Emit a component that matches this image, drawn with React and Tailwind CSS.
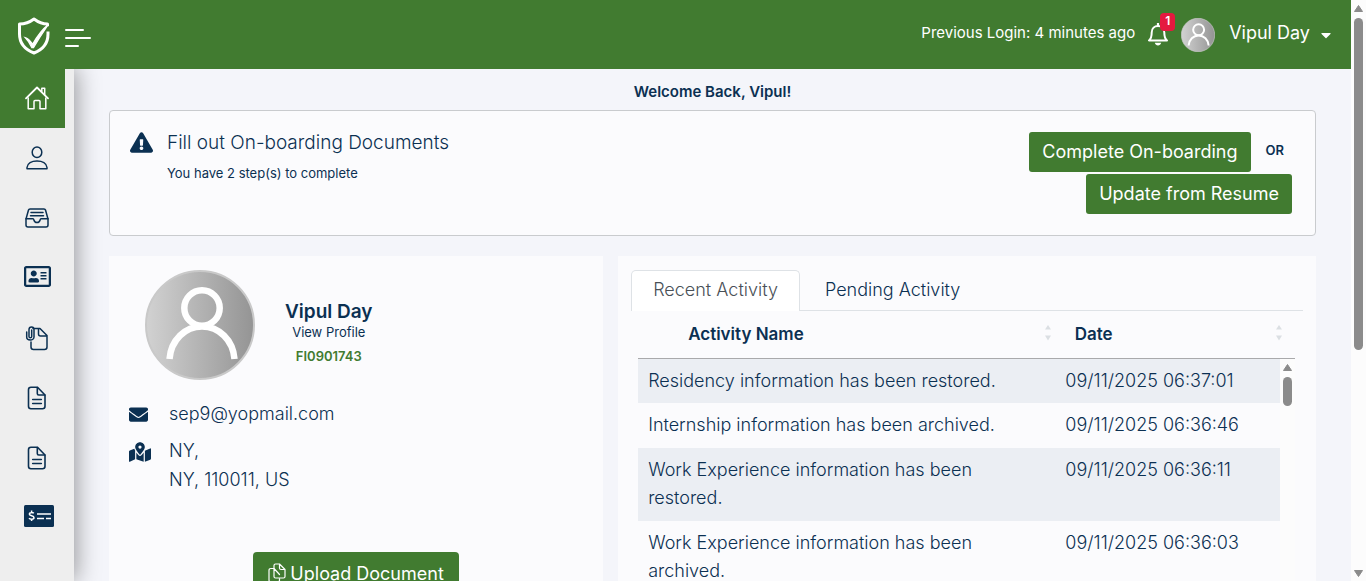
import React from "react";
import { FaExclamationTriangle, FaEnvelope, FaMapMarkedAlt, FaRegAddressCard, FaCaretDown } from "react-icons/fa";

function ShieldLogo() {
  return (
    <svg width="34" height="40" viewBox="0 0 34 40" fill="none" stroke="#fff" strokeWidth="3">
      <path d="M30.5 10.2V8C25 8 21 6 17 3C13 6 9 8 2.5 8V18C2.5 28 8 33.500 17 37C26 33.500 31 28 31 18V15.500" strokeLinejoin="round" />
      <path d="M8.200 21.600C10.500 22 13 24.500 15.600 28.200C20 20.500 25 13.500 31.300 8.500C25.500 17 21 24 16.600 31.500L14.800 31.500C13 27.500 11 24.500 8.200 21.600Z" fill="#fff" strokeWidth="1.300" />
    </svg>
  );
}

function MenuIcon() {
  return (
    <svg width="26" height="20" viewBox="0 0 26 20" fill="#fff">
      <rect x="0" y="1" width="19" height="2" rx="1" />
      <rect x="0" y="9" width="26" height="2" rx="1" />
      <rect x="0" y="17" width="14" height="2" rx="1" />
    </svg>
  );
}

function BellIcon() {
  return (
    <svg width="20" height="23" viewBox="0 0 20 23" fill="none">
      <path d="M1 17.500H19C16.500 15.500 16.300 13 16.300 9.500C16.300 5.500 13.500 3 10 3C6.500 3 3.700 5.500 3.700 9.500C3.700 13 3.500 15.500 1 17.500Z" stroke="#fff" strokeWidth="2" strokeLinejoin="round" />
      <path d="M10 0.500V3" stroke="#fff" strokeWidth="2.200" strokeLinecap="round" />
      <path d="M6.800 19.700H13.200C12.700 21.500 11.500 22.400 10 22.400C8.500 22.400 7.300 21.500 6.800 19.700Z" fill="#fff" />
    </svg>
  );
}

function Avatar({ id, className }) {
  return (
    <svg viewBox="0 0 110 110" className={className} role="img" aria-label="Vipul Day">
      <defs>
        <linearGradient id={id} x1="0" x2="1" y1="0" y2="0">
          <stop offset="0" stopColor="#d2d2d2" />
          <stop offset="1" stopColor="#949494" />
        </linearGradient>
      </defs>
      <circle cx="55" cy="55" r="54" fill={`url(#${id})`} stroke="#c9c9c9" strokeWidth="2" />
      <circle cx="57" cy="38" r="17.700" fill="none" stroke="#fff" strokeWidth="6.500" />
      <path d="M24.500 89C26 70 40 56.500 57 56.500C74 56.500 88 70 89.500 89" fill="none" stroke="#fff" strokeWidth="6.500" />
    </svg>
  );
}

const line = { fill: "none", stroke: "currentColor", strokeWidth: 1.5, strokeLinejoin: "round", strokeLinecap: "round" };

function HomeIcon() {
  return (
    <svg width="24" height="24" viewBox="0 0 24 24" {...line}>
      <path d="M1 12.300L12 1.500L23 12.300" strokeWidth="1.800" />
      <path d="M3.200 12V22.800H9V15.500C9 14.800 9.500 14.500 10 14.500H14C14.500 14.500 15 14.800 15 15.500V22.800H20.800V12M16.800 5.300V2.300H19.700V8.500" />
    </svg>
  );
}

function PersonIcon() {
  return (
    <svg width="24" height="24" viewBox="0 0 24 24" {...line}>
      <ellipse cx="12" cy="6.300" rx="4.800" ry="5.300" />
      <path d="M2 22.700V21.500C2.500 17.500 6.500 15 12 15C17.500 15 21.500 17.500 22 21.500V22.700Z" />
    </svg>
  );
}

function InboxIcon() {
  return (
    <svg width="24" height="20" viewBox="0 0 24 20" {...line}>
      <path d="M1 11L3.500 2C3.700 1.300 4.200 1 5 1H19C19.800 1 20.300 1.300 20.500 2L23 11V17C23 18.300 22.300 19 21 19H3C1.700 19 1 18.300 1 17Z" />
      <path d="M1 10.800H8C8.500 10.800 8.700 11.200 8.900 12C9.300 13.600 10.400 14.500 12 14.500C13.600 14.500 14.700 13.600 15.100 12C15.300 11.200 15.500 10.800 16 10.800H23M6 4.500H18M5.500 7.700H18.500" />
    </svg>
  );
}

function ClipDocIcon() {
  return (
    <svg width="24" height="26" viewBox="0 0 24 26" {...line}>
      <path d="M8 3.500H15L22 10.500V22C22 23.500 21 24.500 19.500 24.500H8.500C7 24.500 6 23.500 6 22V17M13.500 3.500V9C13.500 10.500 14 11 15.500 11H22" />
      <path d="M1.700 7V12C1.700 16 9 16 9 12V4.500C9 1 4 1 4 4.500V11.500C4 13.300 6.700 13.300 6.700 11.500V5" />
    </svg>
  );
}

function DocIcon() {
  return (
    <svg width="20" height="24" viewBox="0 0 20 24" {...line} strokeWidth="1.600">
      <path d="M10.500 1.200H4C2.300 1.200 1.500 2 1.500 3.700V20.300C1.500 22 2.300 22.800 4 22.800H15.500C17.200 22.800 18 22 18 20.300V9Z" />
      <path d="M10.300 1.500V7.500C10.300 8.600 10.800 9 11.800 9H17.800M5.700 13.500H14.300M5.700 17.500H14.300" />
    </svg>
  );
}

function CheckIcon() {
  return (
    <svg width="30" height="22" viewBox="0 0 30 22">
      <rect width="30" height="22" rx="1.500" fill="currentColor" />
      <g stroke="#fff" fill="none" strokeWidth="1.500">
        <path d="M9.800 8.300C9 7.400 5.300 7.200 5.300 9C5.300 11.200 10 10.300 10 12.700C10 14.600 6 14.500 5 13.300M7.600 5.500V7.500M7.600 14V16" />
        <path d="M13 9H27M13 13.500H20M22 13.500H27" />
      </g>
    </svg>
  );
}

function CopyDocIcon() {
  return (
    <svg width="18" height="20" viewBox="0 0 18 20" {...line} strokeWidth="1.200">
      <path d="M6 5.500H3C1.500 5.500 1 6 1 7.500V17C1 18.500 1.500 19 3 19H9.500C11 19 11.500 18.500 11.500 17V15.500" />
      <path d="M11.500 1H7.500C6.500 1 6 1.500 6 2.500V13.500C6 14.500 6.500 15 7.500 15H15.500C16.500 15 17 14.500 17 13.500V6.500ZM11.500 1V5C11.500 6 12 6.500 13 6.500H17M6 5.500L11.500 11.500" />
    </svg>
  );
}

function ScrollArrow({ down }) {
  return (
    <svg width="9" height="7" viewBox="0 0 9 7" fill="#8b8b8b" stroke="#8b8b8b" strokeLinejoin="round">
      <path d={down ? "M0.500 0.500H8.500L4.500 6.500Z" : "M0.500 6.500H8.500L4.500 0.500Z"} />
    </svg>
  );
}

function SortIcon() {
  return (
    <svg width="6" height="16" viewBox="0 0 6 16" fill="#dbdfe3" className="-translate-y-0.5">
      <path d="M0 4.500L3 0L6 4.500ZM0 10.500L3 15.500L6 10.500Z" />
    </svg>
  );
}

const NAV = [
  { label: "Home", icon: <HomeIcon />, active: true },
  { label: "Profile", icon: <PersonIcon /> },
  { label: "Inbox", icon: <InboxIcon /> },
  { label: "Credentials", icon: <FaRegAddressCard size={27} />, pad: "pb-1 pl-[9px]" },
  { label: "Attachments", icon: <ClipDocIcon /> },
  { label: "Documents", icon: <DocIcon /> },
  { label: "Reports", icon: <DocIcon /> },
  { label: "Payments", icon: <CheckIcon />, pad: "pb-1 pl-3" },
];

const ACTIVITY = [
  ["Residency information has been restored.", "09/11/2025 06:37:01"],
  ["Internship information has been archived.", "09/11/2025 06:36:46"],
  ["Work Experience information has been restored.", "09/11/2025 06:36:11"],
  ["Work Experience information has been archived.", "09/11/2025 06:36:03"],
];

function Header() {
  return (
    <header className="relative z-20 flex h-[69px] shrink-0 items-center justify-between bg-[#417b30] pr-[17px] pl-[17px] text-white">
      <div className="flex items-center gap-[14px] pt-[2px]">
        <a href="#home" aria-label="Home"><ShieldLogo /></a>
        <button type="button" aria-label="Toggle menu" className="pt-1"><MenuIcon /></button>
      </div>
      <div className="flex items-center">
        <span className="mr-[13px] pb-[2px] text-[15px]">Previous Login: 4 minutes ago</span>
        <button type="button" aria-label="Notifications" className="relative mr-[13px]">
          <BellIcon />
          <span className="absolute -top-[10px] left-3 flex h-[18px] w-[15px] items-center justify-center rounded-[4px] bg-[#e5193f] pb-[2px] text-[12px] font-semibold">1</span>
        </button>
        <Avatar id="avatar-small" className="mr-[14px] size-[34px]" />
        <button type="button" className="flex items-center gap-2 text-[18px]">
          <span className="pb-[5px]">Vipul Day</span>
          <FaCaretDown size={16} />
        </button>
      </div>
    </header>
  );
}

function Sidebar() {
  return (
    <nav className="relative z-10 -mt-px w-[74px] shrink-0 bg-[#eee] shadow-[2px_0_24px_rgba(0,0,0,0.4)]">
      {NAV.map((item) => (
        <a
          key={item.label}
          href={`#${item.label.toLowerCase()}`}
          aria-label={item.label}
          className={`flex h-[60px] w-[65px] items-center justify-center ${item.pad || "pl-[9px]"} ${item.active ? "bg-[#417b30] text-white" : "text-[#0b3052]"}`}
        >
          {item.icon}
        </a>
      ))}
    </nav>
  );
}

function Onboarding() {
  return (
    <section className="flex h-[126px] justify-between rounded-[4px] border border-[#c9cbce] bg-[#fbfbfd] pt-[21px] pr-[23px] pl-5">
      <div className="flex gap-[14px]">
        <FaExclamationTriangle size={23} className="-mt-px" />
        <div>
          <h2 className="text-[19px] leading-[22px] font-light">Fill out On-boarding Documents</h2>
          <p className="mt-[9px] text-[13px] leading-5">You have 2 step(s) to complete</p>
        </div>
      </div>
      <div className="flex flex-col items-end gap-[2px]">
        <div className="flex items-center gap-[15px] pr-2">
          <button type="button" className="h-10 rounded-[3px] bg-[#417b30] px-[13px] pb-[2px] text-[18px] text-white">Complete On-boarding</button>
          <span className="pb-[2px] text-[13px] font-semibold">OR</span>
        </div>
        <button type="button" className="h-10 rounded-[3px] bg-[#417b30] px-[13px] pb-[2px] text-[18px] text-white">Update from Resume</button>
      </div>
    </section>
  );
}

function ProfileCard() {
  return (
    <section className="col-span-5 flex flex-col bg-[#fbfbfd] pt-[14px] pb-10">
      <div className="flex items-center gap-[30px] pl-9">
        <Avatar id="avatar-large" className="size-[110px]" />
        <div className="flex flex-col items-center pt-[14px]">
          <h2 className="text-[19px] leading-6 font-semibold">Vipul Day</h2>
          <a href="#profile" className="text-[13px] leading-4">View Profile</a>
          <p className="mt-2 text-[13px] leading-4 font-semibold text-[#417b30]">FI0901743</p>
        </div>
      </div>
      <div className="mt-[19px] grid grid-cols-[22px_1fr] gap-x-[18px] gap-y-2 pl-5 text-[18px] leading-[29px] font-light">
        <FaEnvelope size={19} className="mt-[6px]" />
        <p>sep9@yopmail.com</p>
        <FaMapMarkedAlt size={22} className="mt-[5px]" />
        <p>NY,<br />NY, 110011, US</p>
      </div>
      <div className="mt-[58px] flex justify-center">
        <button type="button" className="flex h-[42px] items-center gap-1 rounded-[4px] bg-[#417b30] px-[15px] text-[18px] text-white">
          <CopyDocIcon />
          Upload Document
        </button>
      </div>
    </section>
  );
}

function ActivityCard() {
  return (
    <section className="col-span-7 bg-[#fbfbfd] px-[13px] pt-[14px]">
      <div role="tablist" className="flex border-b border-[#dee2e6] text-[18px] leading-[26px] font-light">
        <button type="button" role="tab" aria-selected="true" className="-mb-px rounded-t-[5px] border border-b-0 border-[#dee2e6] bg-white px-[21px] pt-[6px] pb-2 text-[#495057]">Recent Activity</button>
        <button type="button" role="tab" aria-selected="false" className="px-[25px] pt-[7px] pb-[7px]">Pending Activity</button>
      </div>
      <div className="pr-2 pl-[7px]">
        <div className="border-b border-[#a9a9ab] pr-[13px]">
          <table className="w-full table-fixed text-left text-[17px]">
            <thead>
              <tr className="h-[47px]">
                <th className="w-[65%] pr-[6px] pl-[50px] font-semibold">
                  <div className="flex items-center justify-between">Activity Name<SortIcon /></div>
                </th>
                <th className="pl-[18px] font-semibold">
                  <div className="flex items-center justify-between">Date<SortIcon /></div>
                </th>
              </tr>
            </thead>
          </table>
        </div>
        <div className="flex">
          <table className="flex-1 table-fixed text-[18px] leading-7 font-light">
            <tbody>
              {ACTIVITY.map(([name, date], i) => (
                <tr key={date} className={`align-top ${i % 2 ? "" : "bg-[#ebeef3]"} ${i > 1 ? "border-t border-transparent" : ""}`}>
                  <td className="w-[65%] py-2 pr-9 pl-[10px]">{name}</td>
                  <td className="py-2 pl-[10px] whitespace-nowrap">{date}</td>
                </tr>
              ))}
            </tbody>
          </table>
          <div className="flex w-[15px] shrink-0 flex-col items-center gap-[6px] bg-[#fcfcfc] pt-[5px]">
            <ScrollArrow />
            <div className="h-[29px] w-[9px] rounded-full bg-[#8b8b8b]" />
          </div>
        </div>
      </div>
    </section>
  );
}

export default function App() {
  return (
    <div className="flex h-screen overflow-hidden bg-[#f4f5fa] font-['Inter',sans-serif] text-[#0b3052]">
      <div className="flex min-w-0 flex-1 flex-col">
        <Header />
        <div className="flex min-h-0 flex-1">
          <Sidebar />
          <main className="min-w-0 flex-1 overflow-hidden px-[35px] pt-[13px]">
            <h1 className="mb-2 text-center text-[15px] leading-5 font-semibold">Welcome Back, Vipul!</h1>
            <Onboarding />
            <div className="mt-5 grid grid-cols-12 gap-[15px]">
              <ProfileCard />
              <ActivityCard />
            </div>
          </main>
        </div>
      </div>
      <div className="flex w-[15px] shrink-0 flex-col items-center bg-[#fcfcfc] pt-[5px] pb-1">
        <ScrollArrow />
        <div className="mt-[6px] h-[58%] w-[9px] rounded-full bg-[#8b8b8b]" />
        <div className="mt-auto"><ScrollArrow down /></div>
      </div>
    </div>
  );
}
